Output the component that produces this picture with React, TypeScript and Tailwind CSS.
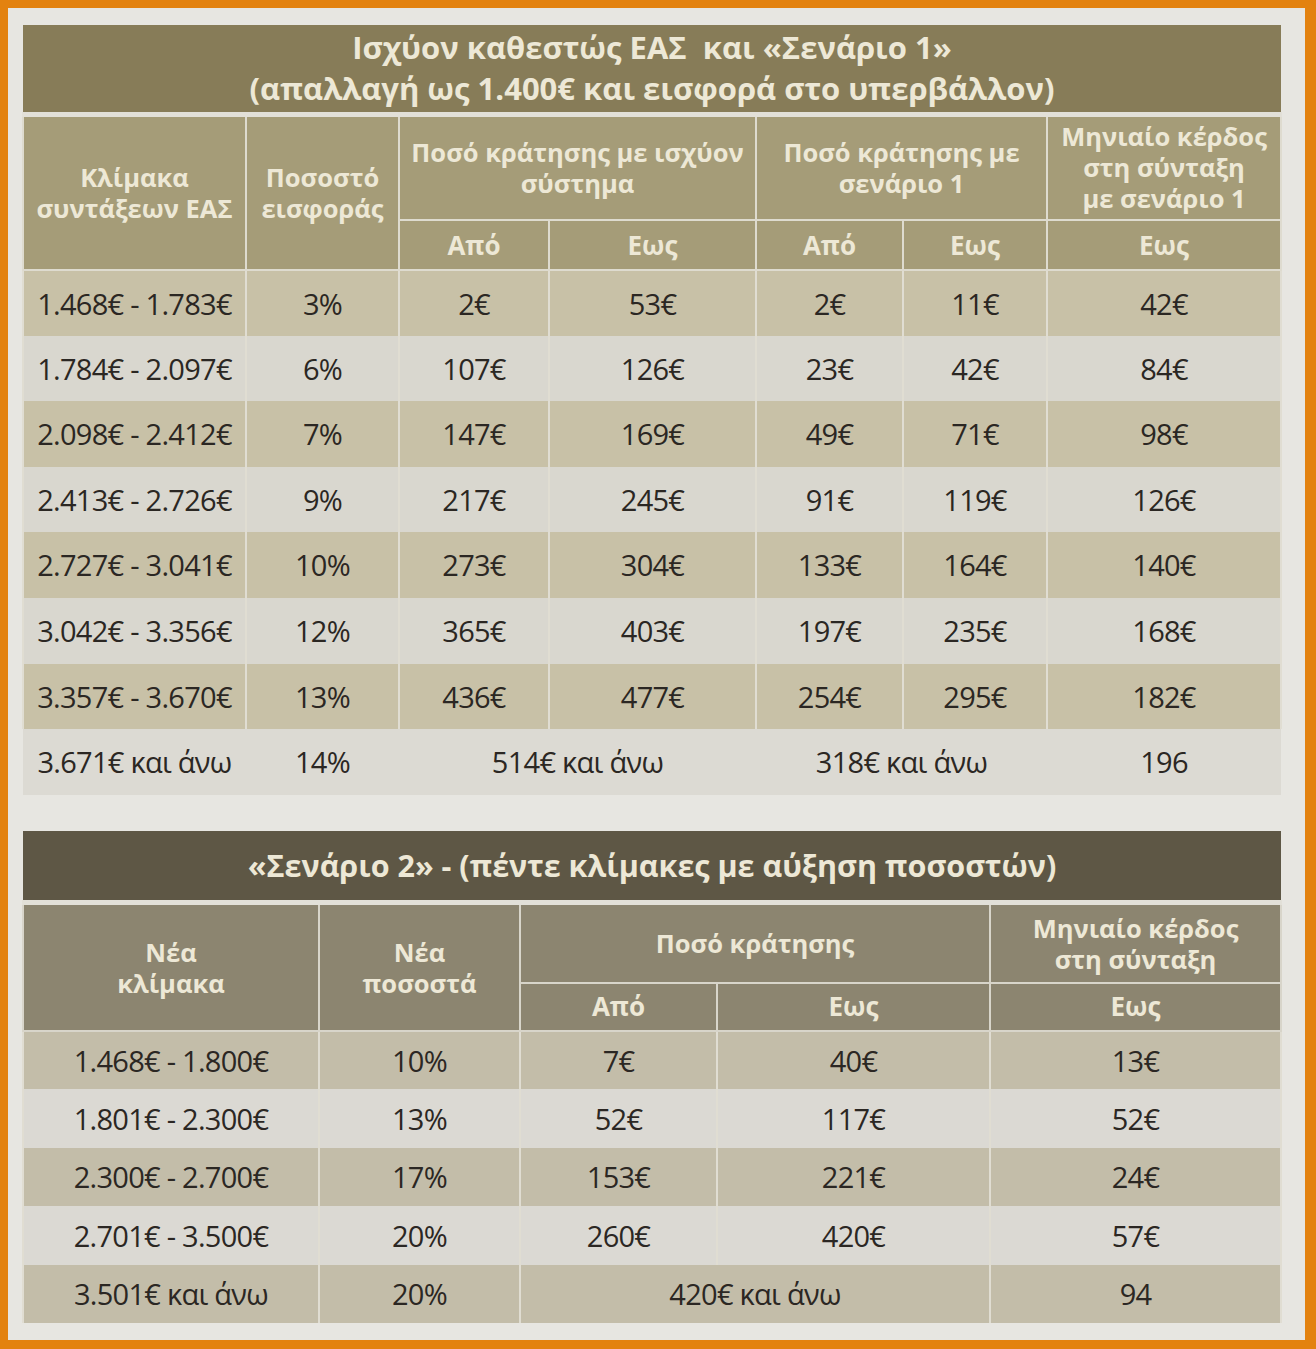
const rows1 = [
  ["1.468€ - 1.783€", "3%", "2€", "53€", "2€", "11€", "42€"],
  ["1.784€ - 2.097€", "6%", "107€", "126€", "23€", "42€", "84€"],
  ["2.098€ - 2.412€", "7%", "147€", "169€", "49€", "71€", "98€"],
  ["2.413€ - 2.726€", "9%", "217€", "245€", "91€", "119€", "126€"],
  ["2.727€ - 3.041€", "10%", "273€", "304€", "133€", "164€", "140€"],
  ["3.042€ - 3.356€", "12%", "365€", "403€", "197€", "235€", "168€"],
  ["3.357€ - 3.670€", "13%", "436€", "477€", "254€", "295€", "182€"],
];

const rows2 = [
  ["1.468€ - 1.800€", "10%", "7€", "40€", "13€"],
  ["1.801€ - 2.300€", "13%", "52€", "117€", "52€"],
  ["2.300€ - 2.700€", "17%", "153€", "221€", "24€"],
  ["2.701€ - 3.500€", "20%", "260€", "420€", "57€"],
];

const font = { fontFamily: '"Open Sans", "Noto Sans", sans-serif' };

const App = () => {
  return (
    <div
      className="w-[1316px] h-[1349px] bg-[#e3820f] p-[8px] pr-[11px] pb-[9px]"
      style={font}
    >
      <div className="h-full bg-[#e7e6e1] pt-[17px] pl-[14px] pr-[13px]">
        {/* first table */}
        <table className="w-[1258px] table-fixed border-collapse text-center">
          <colgroup>
            <col className="w-[223px]" />
            <col className="w-[153px]" />
            <col className="w-[150px]" />
            <col className="w-[207px]" />
            <col className="w-[147px]" />
            <col className="w-[144px]" />
            <col className="w-[234px]" />
          </colgroup>
          <thead>
            <tr>
              <th
                colSpan={7}
                className="h-[89px] bg-[#877c58] border-b-[5px] border-[#e2e0d8] text-[31px] leading-[41px] font-bold text-[#ede8d6]"
              >
                Ισχύον καθεστώς ΕΑΣ&nbsp; και «Σενάριο 1»
                <br />
                (απαλλαγή ως 1.400€ και εισφορά στο υπερβάλλον)
              </th>
            </tr>
            <tr className="bg-[#a59c78] text-[#ede8d6] text-[25.5px] leading-[31px] font-bold">
              <th rowSpan={2} className="border-2 border-[#dedbcf] px-1">
                Κλίμακα
                <br />
                συντάξεων ΕΑΣ
              </th>
              <th rowSpan={2} className="border-2 border-[#dedbcf] px-1">
                Ποσοστό
                <br />
                εισφοράς
              </th>
              <th colSpan={2} className="h-[106px] border-2 border-[#dedbcf] px-1">
                Ποσό κράτησης με ισχύον
                <br />
                σύστημα
              </th>
              <th colSpan={2} className="border-2 border-[#dedbcf] px-1">
                Ποσό κράτησης με
                <br />
                σενάριο 1
              </th>
              <th className="border-2 border-[#dedbcf] px-1">
                Μηνιαίο κέρδος
                <br />
                στη σύνταξη
                <br />
                με σενάριο 1
              </th>
            </tr>
            <tr className="bg-[#a59c78] text-[#ede8d6] text-[26px] font-bold">
              <th className="h-[50px] border-2 border-[#dedbcf]">Από</th>
              <th className="border-2 border-[#dedbcf]">Εως</th>
              <th className="border-2 border-[#dedbcf]">Από</th>
              <th className="border-2 border-[#dedbcf]">Εως</th>
              <th className="border-2 border-[#dedbcf]">Εως</th>
            </tr>
          </thead>
          <tbody className="text-[29px] text-[#2b2723] tracking-tight">
            {rows1.map((row, i) => (
              <tr
                key={i}
                className={i % 2 === 0 ? "bg-[#c8c1a7]" : "bg-[#d9d7cf]"}
              >
                {row.map((cell, j) => (
                  <td key={j} className="h-[65.6px] border-x-2 border-[#e0ddd2]">
                    {cell}
                  </td>
                ))}
              </tr>
            ))}
            <tr className="bg-[#dcdad3]">
              <td className="h-[65.6px]">3.671€ και άνω</td>
              <td>14%</td>
              <td colSpan={2}>514€ και άνω</td>
              <td colSpan={2}>318€ και άνω</td>
              <td>196</td>
            </tr>
          </tbody>
        </table>

        {/* second table */}
        <table className="mt-[36px] w-[1258px] table-fixed border-collapse text-center">
          <colgroup>
            <col className="w-[296px]" />
            <col className="w-[201px]" />
            <col className="w-[197px]" />
            <col className="w-[273px]" />
            <col className="w-[291px]" />
          </colgroup>
          <thead>
            <tr>
              <th
                colSpan={5}
                className="h-[72px] bg-[#5e5745] border-b-[5px] border-[#e2e0d8] text-[30.5px] font-bold text-[#ede8d6]"
              >
                «Σενάριο 2» - (πέντε κλίμακες με αύξηση ποσοστών)
              </th>
            </tr>
            <tr className="bg-[#8c8570] text-[#ede8d6] text-[25.5px] leading-[31px] font-bold">
              <th rowSpan={2} className="border-2 border-[#d8d5ca] px-1">
                Νέα
                <br />
                κλίμακα
              </th>
              <th rowSpan={2} className="border-2 border-[#d8d5ca] px-1">
                Νέα
                <br />
                ποσοστά
              </th>
              <th colSpan={2} className="h-[80px] border-2 border-[#d8d5ca] px-1">
                Ποσό κράτησης
              </th>
              <th className="border-2 border-[#d8d5ca] px-1">
                Μηνιαίο κέρδος
                <br />
                στη σύνταξη
              </th>
            </tr>
            <tr className="bg-[#8c8570] text-[#ede8d6] text-[26px] font-bold">
              <th className="h-[48px] border-2 border-[#d8d5ca]">Από</th>
              <th className="border-2 border-[#d8d5ca]">Εως</th>
              <th className="border-2 border-[#d8d5ca]">Εως</th>
            </tr>
          </thead>
          <tbody className="text-[29px] text-[#2b2723] tracking-tight">
            {rows2.map((row, i) => (
              <tr
                key={i}
                className={i % 2 === 0 ? "bg-[#c3bda9]" : "bg-[#dbd9d3]"}
              >
                {row.map((cell, j) => (
                  <td key={j} className="h-[58.5px] border-x-2 border-[#e0ddd2]">
                    {cell}
                  </td>
                ))}
              </tr>
            ))}
            <tr className="bg-[#c3bda9]">
              <td className="h-[58.5px] border-x-2 border-[#e0ddd2]">3.501€ και άνω</td>
              <td className="border-x-2 border-[#e0ddd2]">20%</td>
              <td colSpan={2} className="border-x-2 border-[#e0ddd2]">
                420€ και άνω
              </td>
              <td className="border-x-2 border-[#e0ddd2]">94</td>
            </tr>
          </tbody>
        </table>
      </div>
    </div>
  );
};

export default App;
